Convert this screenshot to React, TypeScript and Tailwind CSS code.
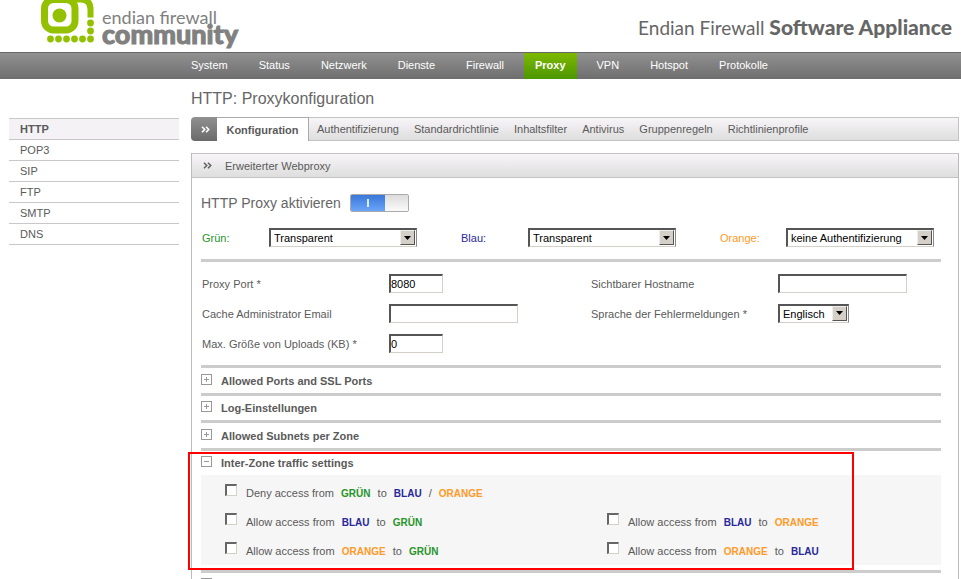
import React, { useState } from 'react';

const NAV = ['System', 'Status', 'Netzwerk', 'Dienste', 'Firewall', 'Proxy', 'VPN', 'Hotspot', 'Protokolle'];
const SIDE = ['HTTP', 'POP3', 'SIP', 'FTP', 'SMTP', 'DNS'];
const TABS = ['Authentifizierung', 'Standardrichtlinie', 'Inhaltsfilter', 'Antivirus', 'Gruppenregeln', 'Richtlinienprofile'];

const Logo: React.FC = () => (
  <a href="#" className="flex items-start" aria-label="endian firewall community">
    <svg width="54" height="43" viewBox="0 0 54 43" fill="none">
      <path d="M30 -.5h10q9.500 0 9.500 10v8" stroke="#93c100" strokeWidth="6" />
      <rect x="3.500" y="-.5" width="30.500" height="30.500" rx="9" stroke="#93c100" strokeWidth="7" fill="#fff" />
      <circle cx="18.500" cy="15.500" r="7" fill="#93c100" />
      {[[49.5, 23], [49.5, 31], [49.5, 39], [41.5, 39], [33.5, 39], [25.5, 39], [17.5, 39], [9.5, 39]].map(([x, y]) => (
        <circle key={`${x}-${y}`} cx={x} cy={y} r="3.4" fill="#93c100" />
      ))}
    </svg>
    <span className="flex flex-col pl-[7px] pt-[9px] text-[#808080]">
      <span className="text-[18px] leading-[16px]">endian firewall</span>
      <span className="text-[27px] leading-[18px] font-black [-webkit-text-stroke:1px]">community</span>
    </span>
  </a>
);

const Chevrons: React.FC<{ color: string }> = ({ color }) => (
  <svg width="9" height="7" viewBox="0 0 9 7" fill="none" stroke={color} strokeWidth="1.6">
    <path d="M1 .8l2.700 2.700L1 6.200M5 .8l2.700 2.700L5 6.200" />
  </svg>
);

interface DropProps {
  id: string;
  options: string[];
  width: string;
}

const Drop: React.FC<DropProps> = ({ id, options, width }) => (
  <span className={`relative inline-block ${width}`}>
    <select
      id={id}
      className="block w-full h-[19px] appearance-none rounded-none border-t-2 border-l-2 border-r border-b border-t-[#555] border-l-[#555] border-r-[#888] border-b-[#d4d0c8] bg-white pl-[3px] pr-4 text-[11px] leading-[14px] text-black"
    >
      {options.map((o) => <option key={o}>{o}</option>)}
    </select>
    <span className="pointer-events-none absolute right-[2px] top-[2px] flex h-[15px] w-[15px] items-center justify-center border border-t-[#eee] border-l-[#eee] border-r-[#555] border-b-[#555] bg-[#d4d0c8]">
      <svg width="7" height="4" viewBox="0 0 7 4"><path d="M0 0h7L3.500 4z" fill="#000" /></svg>
    </span>
  </span>
);

interface FieldProps {
  id: string;
  label: string;
  width?: string;
  value?: string;
  children?: React.ReactNode;
}

const Field: React.FC<FieldProps> = ({ id, label, width, value, children }) => (
  <div className="flex h-5 items-center">
    <label htmlFor={id} className="w-[187px] shrink-0 pt-[2px]">{label}</label>
    {children || (
      <input
        id={id}
        type="text"
        defaultValue={value}
        className={`h-[19px] rounded-none border-t-2 border-l-2 border-r border-b border-t-[#555] border-l-[#555] border-r-[#d4d0c8] border-b-[#d4d0c8] bg-white text-[11px] text-black outline-none ${width}`}
      />
    )}
  </div>
);

const SectionHead: React.FC<{ title?: string; open?: boolean }> = ({ title, open }) => (
  <button type="button" aria-expanded={!!open} className="flex h-[24px] w-full items-center text-left font-bold">
    <svg width="11" height="11" viewBox="0 0 11 11" fill="none" stroke="#999" className="mb-[3px] mr-[9px]">
      <rect x=".5" y=".5" width="10" height="10" />
      <path d={open ? 'M3 5.500h5' : 'M3 5.500h5M5.500 3v5'} />
    </svg>
    {title}
  </button>
);

const zoneColors: Record<string, string> = {
  'GRÜN': 'text-[#289428]',
  BLAU: 'text-[#28289a]',
  ORANGE: 'text-[#ff9a28]',
};

const Zone: React.FC<{ name: string }> = ({ name }) => (
  <b className={`mx-[4px] text-[10px] ${zoneColors[name]}`}>{name}</b>
);

const Rule: React.FC<{ children: React.ReactNode }> = ({ children }) => (
  <label className="flex h-[29px] items-center">
    <input
      type="checkbox"
      className="mb-[5px] mr-[9px] size-[12px] shrink-0 appearance-none border-t-2 border-l-2 border-r border-b border-t-[#666] border-l-[#666] border-r-[#d4d0c8] border-b-[#d4d0c8] bg-white"
    />
    <span className="pt-[2px]">{children}</span>
  </label>
);

export default function App() {
  const [enabled, setEnabled] = useState(true);

  return (
    <div className="h-screen overflow-hidden bg-white font-['Liberation_Sans',Arial,sans-serif] text-[11px] leading-[14px] text-[#5a5a5a]">
      {/* Header */}
      <header className="flex h-[52px] justify-between pl-[41px] pr-[9px] font-['Lato',sans-serif]">
        <Logo />
        <div className="pt-[15px] text-[19px] leading-[24px] text-[#666]">
          Endian Firewall <b className="text-[21px] font-black">Software Appliance</b>
        </div>
      </header>

      <nav className="flex h-[27px] gap-[9px] border-t border-[#666] bg-linear-to-b from-[#919191] to-[#6e6e6e] pl-[180px] text-white">
        {NAV.map((item) => (
          <a
            key={item}
            href="#"
            className={`flex items-center px-[11px] pb-[2px] ${item === 'Proxy' ? 'bg-linear-to-b from-[#7db900] to-[#4b9600] font-bold' : ''}`}
          >
            {item}
          </a>
        ))}
      </nav>

      <div className="flex pl-[9px] pr-[2px]">
        {/* Sidebar */}
        <aside className="mr-[12px] w-[170px] shrink-0 pt-[39px]">
          <ul className="border-t border-[#c8c8c8]">
            {SIDE.map((item) => (
              <li key={item} className="border-b border-[#c8c8c8]">
                <a href="#" className={`flex h-5 items-center pl-[11px] ${item === 'HTTP' ? 'bg-[#f5f2f5] font-bold' : ''}`}>
                  {item}
                </a>
              </li>
            ))}
          </ul>
        </aside>

        <main className="min-w-0 flex-1">
          <h1 className="flex h-[38px] items-center pt-[2px] text-[16px] leading-[20px] text-[#666]">HTTP: Proxykonfiguration</h1>

          {/* Tabs */}
          <div className="flex h-[24px]">
            <span className="flex w-[26px] items-center justify-center rounded-l-[4px] bg-linear-to-b from-[#919191] to-[#6a6a6a] pl-[2px]">
              <Chevrons color="#fff" />
            </span>
            <a href="#" className="flex w-[92px] items-center justify-center border-t border-r border-[#aaa] pt-[1px] font-bold">
              Konfiguration
            </a>
            <div className="flex flex-1 items-center gap-[15px] border-y border-r border-[#c3c3c3] bg-linear-to-b from-[#f8f5f8] to-[#dedede] pl-2">
              {TABS.map((tab) => <a key={tab} href="#">{tab}</a>)}
            </div>
          </div>

          {/* Panel */}
          <section className="mt-3 border-x border-[#bbb]">
            <h2 className="flex h-[25px] items-center border-y border-[#c3c3c3] bg-linear-to-b from-[#f8f5f8] to-[#dedede] pl-[11px]">
              <Chevrons color="#666" />
              <span className="pl-[13px]">Erweiterter Webproxy</span>
            </h2>

            <div className="pl-[9px] pr-[17px] pt-[12px]">
              <div className="flex h-[26px] items-center text-[14px] text-[#666]">
                <span id="proxy-label" className="w-[149px]">HTTP Proxy aktivieren</span>
                <button
                  type="button"
                  role="switch"
                  aria-checked={enabled}
                  aria-labelledby="proxy-label"
                  onClick={() => setEnabled(!enabled)}
                  className={`flex h-[18px] w-[59px] overflow-hidden rounded-[2px] border border-[#aaa] ${enabled ? '' : 'flex-row-reverse'}`}
                >
                  <span className="flex h-full w-[34px] items-center justify-center bg-linear-to-b from-[#3a77d8] to-[#69a5fa]">
                    <span className="h-[8px] w-[2px] bg-[#dcebff]" />
                  </span>
                  <span className="h-full flex-1 bg-linear-to-b from-[#dcdcdc] to-[#fafafa]" />
                </button>
              </div>

              <div className="grid h-[46px] grid-cols-[259fr_259fr_222fr] items-center border-b-3 border-[#ccc]">
                <div className="flex items-center pl-px">
                  <label htmlFor="green" className="w-[67px] pt-px text-[#289428]">Grün:</label>
                  <Drop id="green" width="w-[148px]" options={['Transparent', 'keine Authentifizierung']} />
                </div>
                <div className="flex items-center pl-px">
                  <label htmlFor="blue" className="w-[67px] pt-px text-[#28289a]">Blau:</label>
                  <Drop id="blue" width="w-[148px]" options={['Transparent', 'keine Authentifizierung']} />
                </div>
                <div className="flex items-center pl-px">
                  <label htmlFor="orange" className="w-[66px] pt-px text-[#ff9a28]">Orange:</label>
                  <Drop id="orange" width="w-[148px]" options={['keine Authentifizierung', 'Transparent']} />
                </div>
              </div>

              <div className="grid grid-cols-[389fr_350fr] gap-y-[10px] border-b-3 border-[#ccc] pt-[11px] pb-[12px] pl-px">
                <Field id="port" label="Proxy Port *" width="w-[54px]" value="8080" />
                <Field id="host" label="Sichtbarer Hostname" width="w-[129px]" />
                <Field id="mail" label="Cache Administrator Email" width="w-[129px]" />
                <Field id="lang" label="Sprache der Fehlermeldungen *">
                  <Drop id="lang" width="w-[71px]" options={['Englisch', 'Deutsch']} />
                </Field>
                <Field id="upload" label="Max. Größe von Uploads (KB) *" width="w-[54px]" value="0" />
              </div>

              <div className="border-b-3 border-[#ccc] pt-px"><SectionHead title="Allowed Ports and SSL Ports" /></div>
              <div className="border-b-3 border-[#ccc]"><SectionHead title="Log-Einstellungen" /></div>
              <div className="border-b-3 border-[#ccc] pt-px"><SectionHead title="Allowed Subnets per Zone" /></div>

              <div className="relative border-b-3 border-[#ccc] pb-[5px]">
                <SectionHead title="Inter-Zone traffic settings" open />
                <div className="grid grid-cols-[382fr_334fr] bg-[#f6f6f6] pl-6 pt-[3px]">
                  <div className="col-span-2">
                    <Rule>Deny access from <Zone name="GRÜN" /> to <Zone name="BLAU" /> / <Zone name="ORANGE" /></Rule>
                  </div>
                  <Rule>Allow access from <Zone name="BLAU" /> to <Zone name="GRÜN" /></Rule>
                  <Rule>Allow access from <Zone name="BLAU" /> to <Zone name="ORANGE" /></Rule>
                  <Rule>Allow access from <Zone name="ORANGE" /> to <Zone name="GRÜN" /></Rule>
                  <Rule>Allow access from <Zone name="ORANGE" /> to <Zone name="BLAU" /></Rule>
                </div>
                {/* Highlight frame */}
                <div className="pointer-events-none absolute -left-[13px] right-[87px] top-px bottom-0 border-2 border-[#f00]" />
              </div>

              <SectionHead />
            </div>
          </section>
        </main>
      </div>
    </div>
  );
}
